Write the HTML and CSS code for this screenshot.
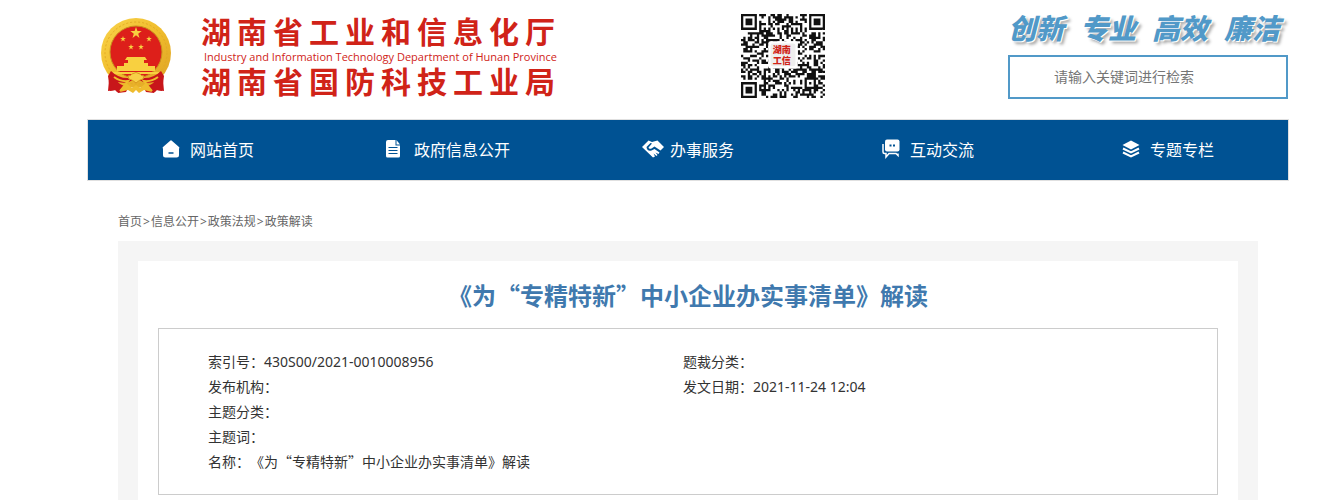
FILE: index.html
```html
<!DOCTYPE html>
<html lang="zh-CN">
<head>
    <meta charset="UTF-8">
    <meta name="viewport" content="width=device-width, initial-scale=1.0">
    <title>《为“专精特新”中小企业办实事清单》解读</title>
    <link rel="stylesheet" href="styles.css">
</head>
<body>
    <header class="header">
        <div class="brand">
            <svg class="emblem" viewBox="0 0 72 78" aria-hidden="true">
                <defs>
                    <linearGradient id="gold" x1="0" y1="0" x2="1" y2="1">
                        <stop offset="0" stop-color="#f9d44c"/>
                        <stop offset="0.5" stop-color="#f0bd2c"/>
                        <stop offset="1" stop-color="#dda126"/>
                    </linearGradient>
                    <path id="star" d="M0-6 1.4-1.9H5.7L2.2.7 3.5 4.9 0 2.3-3.5 4.9-2.2.7-5.7-1.9H-1.4Z"/>
                </defs>
                <path d="M10 52 8 74l8-1 2 3 8-1 4-8 6-4 6 4 4 8 8 1 2-3 8 1-2-22Z" fill="#c8161a"/>
                <circle cx="36" cy="36" r="35" fill="url(#gold)"/>
                <circle cx="36" cy="36" r="31" fill="none" stroke="#e3aa25" stroke-width="1" stroke-dasharray="2 2"/>
                <circle cx="36" cy="35" r="26" fill="#dd1f1a" stroke="#c9901f"/>
                <g fill="#f8d040">
                    <use href="#star" x="36" y="16"/>
                    <use href="#star" transform="translate(23 22) scale(.5)"/>
                    <use href="#star" transform="translate(49 22) scale(.5)"/>
                    <use href="#star" transform="translate(31 30) scale(.5)"/>
                    <use href="#star" transform="translate(41 30) scale(.5)"/>
                    <path d="M27 40h18l2 3H25ZM28 43h16v3H28ZM24 46h24v3H24ZM17 49h38v5H17Z"/>
                    <path d="M13 55h46v2H13Z"/>
                </g>
                <path d="M11 54q8 8 19 7l6-5 6 5q11 1 19-7l3 5-2 15-5-1-2 2-4-1q-1-5 3-9-9 2-15-2l-3 3-3-3q-6 4-15 2 4 4 3 9l-4 1-2-2-5 1-2-15Z" fill="#c8161a"/>
                <path d="M14 60q7 5 14 4l-8 10M58 60q-7 5-14 4l8 10" fill="none" stroke="#f0bd2c" stroke-width="2"/>
                <path d="M28 59q3 0 4-2 4-3 8 0 1 2 4 2 0 4-4 4l-4 3-4-3q-4 0-4-4Z" fill="#f8cf47" stroke="#d99b1f"/>
                <path d="m20 75 6-9 6 5 4-3 4 3 6-5 6 9-8-2-5 3-3-3-3 3-5-3Z" fill="#efbc2e"/>
            </svg>
            <div class="brand-text">
                <p class="brand-name">湖南省工业和信息化厅</p>
                <p class="brand-en">Industry and Information Technology Department of Hunan Province</p>
                <p class="brand-name">湖南省国防科技工业局</p>
            </div>
        </div>

        <svg class="qrcode" id="qrcode" viewBox="0 0 37 37" role="img" aria-label="湖南工信">
            <path id="qrModules" fill="#111"/>
            <rect x="12" y="12" width="13" height="12" rx="1" fill="#fff"/>
            <rect x="13" y="13" width="11" height="10" rx="1" fill="#eee"/>
            <text class="qr-label" x="18" y="17">湖南</text>
            <text class="qr-label" x="18" y="22">工信</text>
        </svg>

        <div class="header-side">
            <p class="slogan"><span>创新</span><span>专业</span><span>高效</span><span>廉洁</span></p>
            <form class="search">
                <input class="search-input" type="text" placeholder="请输入关键词进行检索" aria-label="请输入关键词进行检索">
            </form>
        </div>
    </header>

    <nav class="nav">
        <a class="nav-item" href="#">
            <svg class="nav-icon" viewBox="0 0 22 20"><path d="M8.500 1.500 1 8q-1 1 0 1.500V16q0 2.500 2.500 2.500h11Q17 18.500 17 16V9.500Q18 9 17 8L9.500 1.500q-.5-.4-1 0Z" fill="#fff"/><path d="M6.500 14h5" stroke="#005293" stroke-width="1.500"/></svg>
            网站首页
        </a>
        <a class="nav-item" href="#">
            <svg class="nav-icon" viewBox="0 0 22 20"><path d="M2 1h7.500v5.500H14V17q0 1.500-1.500 1.500h-11Q0 18.500 0 17V3q0-2 2-2Z" fill="#fff"/><path d="M10.500 1 14 5.500h-3.500Z" fill="#fff"/><path d="M2.500 8.500h9M2.500 11.500h9M2.500 14.500h9" stroke="#005293"/></svg>
            政府信息公开
        </a>
        <a class="nav-item" href="#">
            <svg class="nav-icon" viewBox="0 0 22 20"><path d="m0 8 6.500-6.500L10 3l5.500-1.500L22 8l-3.500 3.500-6-4-3 2Q7 10.500 6.500 8.500L10 4.500 8.500 4 4.500 8q.5 4.500 5 3.500l3-1.500 5 3.500-1 1.500-3-1.500 2 2.500-1 1-3-2.500 1.500 3-2 1Z" fill="#fff"/></svg>
            办事服务
        </a>
        <a class="nav-item" href="#">
            <svg class="nav-icon" viewBox="0 0 22 20"><path d="M5 .5h10.500q2 0 2 2v8q0 2-2 2H5q-2 0-2-2v-8q0-2 2-2Z" fill="#fff"/><path d="M1 5v8q0 1.500 1.500 1.500H4V18l3-3.500h7l2 2v-2" fill="none" stroke="#fff" stroke-width="1.500"/><path d="M7.500 5.500h2v2h-2Zm3.500 0h2v2h-2Z" fill="#005293"/></svg>
            互动交流
        </a>
        <a class="nav-item" href="#">
            <svg class="nav-icon" viewBox="0 0 22 20"><path d="m9 1.500 8.500 4.500L9 10.500.5 6Z" fill="#fff"/><path d="m1 9.500 8 4 8-4M1 13.500l8 4 8-4" fill="none" stroke="#fff" stroke-width="2"/></svg>
            专题专栏
        </a>
    </nav>

    <main class="main">
        <div class="breadcrumb">
            <a href="#">首页</a>&gt;<a href="#">信息公开</a>&gt;<a href="#">政策法规</a>&gt;<a href="#">政策解读</a>
        </div>
        <div class="panel">
            <article class="article">
                <h1 class="title">《为“专精特新”中小企业办实事清单》解读</h1>
                <ul class="info">
                    <li>索引号：430S00/2021-0010008956</li>
                    <li>题裁分类：</li>
                    <li>发布机构：</li>
                    <li>发文日期：2021-11-24 12:04</li>
                    <li class="info-wide">主题分类：</li>
                    <li class="info-wide">主题词：</li>
                    <li class="info-wide info-name">名称：《为“专精特新”中小企业办实事清单》解读</li>
                </ul>
            </article>
        </div>
    </main>

    <script src="qrcode.js"></script>
</body>
</html>
```
FILE: styles.css
```css
* {
    margin: 0;
    padding: 0;
    box-sizing: border-box;
}

body {
    display: flex;
    flex-direction: column;
    min-height: 100vh;
    padding-left: 32px;
    background: #fff;
    color: #333;
    font-family: "Noto Sans", "Noto Sans CJK SC", sans-serif;
    font-size: 14px;
    text-spacing-trim: space-all;
}

a {
    color: inherit;
    text-decoration: none;
}

ul {
    list-style: none;
}

/* header */
.header {
    display: flex;
    justify-content: space-between;
    width: 100%;
    max-width: 1200px;
    height: 119px;
    margin: 0 auto;
}

.brand {
    display: flex;
    gap: 29px;
    padding: 16px 0 0 12px;
}

.emblem {
    width: 72px;
    height: 78px;
    margin-top: 1px;
}

.brand-name {
    color: #d02318;
    font-size: 30px;
    font-weight: 700;
    line-height: 32px;
    letter-spacing: 6px;
}

.brand-en {
    padding-left: 3px;
    color: #d02318;
    font-family: "Open Sans", sans-serif;
    font-size: 11px;
    font-weight: 500;
    line-height: 18px;
}

.qrcode {
    width: 84px;
    height: 84px;
    margin: 14px 4px 0 0;
}

.qr-label {
    fill: #d02318;
    font-size: 4px;
    font-weight: 900;
    text-anchor: middle;
}

.header-side {
    width: 280px;
    padding-top: 8px;
}

.slogan {
    display: flex;
    justify-content: space-between;
    padding-right: 8px;
    color: #5199c8;
    font-size: 28px;
    font-style: italic;
    font-weight: 900;
    line-height: 40px;
    text-shadow: 1px 1px 0 #fff, 3px 3px 3px #aaa;
}

.search {
    margin-top: 7px;
}

.search-input {
    width: 100%;
    height: 44px;
    padding: 0 44px 2px;
    border: 2px solid #5199c8;
    background: #fff;
    font-family: inherit;
    font-size: 14px;
}

.search-input::placeholder {
    color: #757575;
}

/* nav */
.nav {
    display: flex;
    width: 100%;
    max-width: 1202px;
    margin: 0 auto;
    border: 1px solid #e0e0e0;
    background: #005293;
}

.nav-item {
    display: flex;
    flex: 1;
    align-items: center;
    justify-content: center;
    gap: 6px;
    height: 60px;
    padding-bottom: 2px;
    color: #fff;
    font-size: 16px;
}

.nav-icon {
    width: 22px;
    height: 20px;
}

/* content */
.main {
    display: flex;
    flex: 1;
    flex-direction: column;
    width: 100%;
    max-width: 1140px;
    margin: 0 auto;
}

.breadcrumb {
    padding: 31px 0 9px;
    color: #666;
    font-size: 12px;
    line-height: 20px;
}

.breadcrumb a {
    margin-right: 1px;
}

.breadcrumb a + a {
    margin-left: 1px;
}

.panel {
    display: flex;
    flex: 1;
    padding: 20px 20px 0;
    background: #f5f5f5;
}

.article {
    flex: 1;
    padding: 0 20px;
    background: #fff;
}

.title {
    padding: 14px 0 13px;
    color: #4079ae;
    font-family: "Noto Sans CJK SC", sans-serif;
    font-size: 24px;
    line-height: 40px;
    text-align: center;
}

.info {
    display: grid;
    grid-template-columns: 1fr 1fr;
    padding: 20px 59px 20px 49px;
    border: 1px solid #ccc;
    line-height: 25px;
}

.info-wide {
    grid-column: 1 / 3;
}

.info-name {
    font-family: "Noto Sans CJK SC", sans-serif;
}
```
FILE: qrcode.js
```js
// draws the QR code modules as one path
const size = 37;
let seed = 2021;

function random() {
    seed = (seed * 1103515245 + 12345) % 2147483648;
    return seed / 2147483648;
}

// square rings: finder patterns are 7 wide, the alignment pattern is 5
function ring(x, y, left, top, width) {
    const half = (width - 1) / 2;
    const d = Math.max(Math.abs(x - left - half), Math.abs(y - top - half));
    if (d > half + (width === 7 ? 1 : 0)) return null;
    return width === 7 ? d === 3 || d < 2 : d !== 1;
}

let path = '';
for (let y = 0; y < size; y++) {
    for (let x = 0; x < size; x++) {
        const noise = random() < 0.5;
        const dark = ring(x, y, 0, 0, 7) ?? ring(x, y, 30, 0, 7) ?? ring(x, y, 0, 30, 7)
            ?? ring(x, y, 28, 28, 5) ?? (x === 6 || y === 6 ? (x + y) % 2 === 0 : noise);
        if (dark) path += `M${x} ${y}h1v1h-1z`;
    }
}
document.getElementById('qrModules').setAttribute('d', path);
```
